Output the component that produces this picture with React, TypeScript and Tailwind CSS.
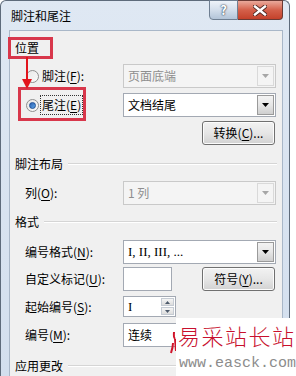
import React from 'react'

const font = 'font-["Noto_Sans_CJK_SC","Noto_Sans",sans-serif]'

const Arrow = ({ disabled }: { disabled?: boolean }) => (
  <svg width="7" height="4" viewBox="0 0 7 4">
    <path d="M0 0H7L3.5 4Z" fill={disabled ? '#a6a6a6' : '#000'} />
  </svg>
)

const Combo = ({ text, disabled, serif, w = 'w-[153px]', h = 'h-[24px]' }: { text: string; disabled?: boolean; serif?: boolean; w?: string; h?: string }) => (
  <div
    className={`${w} ${h} flex items-stretch border ${
      disabled ? 'border-[#c9c9c9] bg-[#f4f4f4] text-[#8e8e8e]' : 'border-[#a3a9b3] bg-white text-black'
    }`}
  >
    <div
      className={`flex-1 flex items-center pl-[4px] ${
        serif ? 'font-["Liberation_Serif",serif] text-[13px]' : 'text-[12px]'
      }`}
    >
      {text}
    </div>
    <div
      className={`w-[17px] m-[1px] flex items-center justify-center border ${
        disabled
          ? 'border-[#d9d9d9] bg-[#f4f4f4]'
          : 'border-[#9a9a9a] bg-gradient-to-b from-[#f3f3f3] via-[#e6e6e6] to-[#cfcfcf]'
      }`}
    >
      <Arrow disabled={disabled} />
    </div>
  </div>
)

const Btn = ({ children }: { children: React.ReactNode }) => (
  <div className="w-[73px] h-[24px] rounded-[3px] border border-[#707070] bg-gradient-to-b from-[#f2f2f2] via-[#e6e6e6] to-[#d2d2d2] flex items-center justify-center text-[12px] text-black shadow-[inset_0_0_0_1px_#fcfcfc]">
    {children}
  </div>
)

const Header = ({ text, extra = '' }: { text: string; extra?: string }) => (
  <div className={`h-[20px] flex items-center pl-[5px] pr-[5px] text-[12px] text-black ${extra}`}>
    <span>{text}</span>
    <div className="flex-1 ml-[5px] border-t border-[#d5d5d5] border-b border-b-white" />
  </div>
)

const Row = ({ label, children, mt }: { label: React.ReactNode; children: React.ReactNode; mt: string }) => (
  <div className={`${mt} flex items-center`}>
    <div className="w-[113px] pl-[15px] text-[12px] text-black">{label}</div>
    {children}
  </div>
)

const U = ({ c }: { c: string }) => <span className="underline underline-offset-[2px]">{c}</span>

const Radio = ({ checked }: { checked?: boolean }) => (
  <div className="w-[13px] h-[13px] rounded-full border border-[#8f8f8f] bg-gradient-to-br from-[#e8e8e8] to-[#fafafa] flex items-center justify-center">
    {checked && <div className="w-[7px] h-[7px] rounded-full bg-gradient-to-br from-[#2a5fb0] to-[#5fa5e8] border border-[#1d4f96]" />}
  </div>
)

export default function App() {
  return (
    <div className={`relative w-[296px] h-[376px] bg-white overflow-hidden ${font}`}>
      <div className="w-[290px] h-[376px] border-l border-r border-t border-[#5e6b7b] rounded-t-[6px] bg-gradient-to-b from-[#dfe8f3] to-[#d3dfee] flex flex-col">
        {/* title bar */}
        <div className="h-[29px] flex items-start">
          <div className="pl-[10px] h-[29px] flex items-center text-[12px] text-black">脚注和尾注</div>
          <div className="ml-auto mr-[6px] flex -mt-px">
            <div className="w-[29px] h-[20px] rounded-bl-[4px] border border-[#6f7f92] bg-gradient-to-b from-[#eef3f9] via-[#d3deeb] to-[#b3c4d8] flex items-center justify-center text-[13px] font-bold text-white [text-shadow:0_0_2px_#2b3b4e,0_0_1px_#2b3b4e]">
              ?
            </div>
            <div className="w-[45px] h-[20px] rounded-br-[4px] border border-l-0 border-[#6b3a34] bg-gradient-to-b from-[#e9a99b] via-[#d4604a] to-[#c4412a] flex items-center justify-center">
              <svg width="14" height="11" viewBox="0 0 14 11">
                <path d="M2 1.5L12 9.5M12 1.5L2 9.5" stroke="#4a2520" strokeWidth="4.2" strokeLinecap="square" />
                <path d="M2 1.5L12 9.5M12 1.5L2 9.5" stroke="#fff" strokeWidth="2.4" strokeLinecap="square" />
              </svg>
            </div>
          </div>
        </div>

        {/* client */}
        <div className="ml-[8px] w-[274px] flex-1 bg-[#f0f0f0] border border-b-0 border-[#a9b7c8] flex flex-col">
          <div className="mt-[7px] h-[20px] flex items-center pl-[5px] text-[12px] text-black">位置</div>

          <div className="mt-[6px] flex items-center">
            <div className="w-[113px] pl-[16px] flex items-center text-[12px] text-black">
              <Radio />
              <span className="ml-[3px]">脚注(<U c="F" />):</span>
            </div>
            <Combo text="页面底端" disabled />
          </div>

          <div className="mt-[5px] flex items-center">
            <div className="w-[113px] pl-[16px] flex items-center text-[12px] text-black">
              <Radio checked />
              <span className="ml-[1px] px-[1px] border border-dotted border-[#333]">尾注(<U c="E" />)</span>
            </div>
            <Combo text="文档结尾" />
          </div>

          <div className="mt-[4px] flex justify-end pr-[7px]">
            <Btn>
              转换(<U c="C" />)...
            </Btn>
          </div>

          <Header text="脚注布局" extra="mt-[9px]" />

          <Row label={<>列(<U c="O" />):</>} mt="mt-[7px]">
            <Combo text="1 列" disabled />
          </Row>

          <Header text="格式" extra="mt-[7px]" />

          <Row label={<>编号格式(<U c="N" />):</>} mt="mt-[8px]">
            <Combo text="I, II, III, ..." serif />
          </Row>

          <Row label={<>自定义标记(<U c="U" />):</>} mt="mt-[3px]">
            <div className="w-[49px] h-[24px] bg-white border border-[#a3a9b3]" />
            <div className="ml-auto mr-[7px]">
              <Btn>
                符号(<U c="Y" />)...
              </Btn>
            </div>
          </Row>

          <Row label={<>起始编号(<U c="S" />):</>} mt="mt-[5px]">
            <div className="w-[53px] h-[21px] bg-white border border-[#a3a9b3] flex">
              <div className="flex-1 pl-[4px] flex items-center font-['Liberation_Serif',serif] text-[13px] text-black">I</div>
              <div className="w-[15px] flex flex-col gap-px p-px">
                <div className="flex-1 border border-[#c5cbd3] bg-gradient-to-b from-[#f5f5f5] to-[#dcdcdc] flex items-center justify-center">
                  <svg width="5" height="3" viewBox="0 0 5 3"><path d="M0 3H5L2.5 0Z" fill="#4d5a6b" /></svg>
                </div>
                <div className="flex-1 border border-[#c5cbd3] bg-gradient-to-b from-[#f5f5f5] to-[#dcdcdc] flex items-center justify-center">
                  <svg width="5" height="3" viewBox="0 0 5 3"><path d="M0 0H5L2.5 3Z" fill="#4d5a6b" /></svg>
                </div>
              </div>
            </div>
          </Row>

          <Row label={<>编号(<U c="M" />):</>} mt="mt-[6px]">
            <Combo text="连续" />
          </Row>

          <Header text="应用更改" extra="mt-[9px]" />
        </div>
      </div>

      {/* red annotations */}
      <div className="absolute left-[8px] top-[37px] w-[45px] h-[22px] border-[3px] border-[#d8374b]" />
      <div className="absolute left-[18px] top-[87px] w-[68px] h-[34px] border-[3px] border-[#d8374b]" />
      <svg className="absolute left-[20px] top-[57px]" width="14" height="34" viewBox="0 0 14 34">
        <path d="M7 0V24" stroke="#e2141c" strokeWidth="2" />
        <path d="M2 22H12L7 32Z" fill="#e2141c" />
      </svg>

      {/* watermark */}
      <svg className="absolute left-[170px] top-[331px]" width="8" height="24" viewBox="0 0 8 24">
        <path d="M4 1C4 4 3 6 5 8M5 8L6 20M3 12C3 16 2 19 1 22" stroke="#d0142a" strokeWidth="2" fill="none" />
      </svg>
      <div className="absolute left-[176px] top-[318px] w-[120px] h-[58px] bg-white flex flex-col pl-[2px]">
        <div className="mt-[4px] h-[26px] flex items-center whitespace-nowrap text-[22px] leading-none tracking-[1.5px] text-[#c8102e] font-light">
          易采站长站
        </div>
        <div className="mt-[8px] pl-[1px] whitespace-nowrap font-['Liberation_Mono',monospace] text-[15px] leading-none text-[#8c8c8c]">
          www.easck.com
        </div>
      </div>
    </div>
  )
}
